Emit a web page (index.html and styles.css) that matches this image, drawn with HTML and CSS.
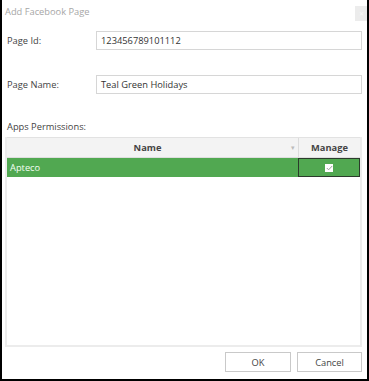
FILE: index.html
```html
<!DOCTYPE html>
<html>
<head>
<meta charset="utf-8">
<link rel="stylesheet" href="styles.css">
</head>
<body>
<div class="dialog">
  <div class="titlebar">
    <span class="title">Add Facebook Page</span>
    <span class="close">&#x2715;</span>
  </div>
  <div class="field">
    <label class="label">Page Id:</label>
    <div class="input">123456789101112</div>
  </div>
  <div class="field field-2">
    <label class="label">Page Name:</label>
    <div class="input">Teal Green Holidays</div>
  </div>
  <div class="section-label">Apps Permissions:</div>
  <div class="grid">
    <div class="grid-head">
      <div class="col-name">Name<span class="sort">&#9662;</span></div>
      <div class="col-manage">Manage</div>
    </div>
    <div class="grid-row selected">
      <div class="col-name cell">Apteco</div>
      <div class="col-manage cell focused">
        <span class="check">
          <svg width="7" height="6" viewBox="0 0 7 6"><path d="M0.8 3 L2.6 4.8 L6.2 1" fill="none" stroke="#9a9a9a" stroke-width="1"/></svg>
        </span>
      </div>
    </div>
  </div>
  <div class="buttons">
    <button class="btn btn-ok">OK</button>
    <button class="btn">Cancel</button>
  </div>
</div>
</body>
</html>
```
FILE: styles.css
```css
html, body {
  margin: 0;
  padding: 0;
  background: #fff;
}
body {
  font-family: "Open Sans", "Noto Sans", sans-serif;
  font-size: 9.3px;
  color: #444;
}
.dialog {
  width: 369px;
  height: 381px;
  box-sizing: border-box;
  border-left: 2px solid #000;
  border-right: 2px solid #000;
  border-bottom: 2px solid #000;
  display: flex;
  flex-direction: column;
  background: #fff;
}
.titlebar {
  height: 31px;
  display: flex;
  align-items: flex-start;
  justify-content: space-between;
  padding-left: 3px;
  box-sizing: border-box;
}
.title {
  margin-top: 5px;
  color: #a6a6a6;
  font-size: 9.3px;
}
.close {
  margin-top: 6px;
  width: 12px;
  height: 15px;
  background: #ececec;
  color: #fafafa;
  font-size: 6px;
  display: flex;
  align-items: center;
  justify-content: center;
}
.field {
  display: flex;
  align-items: center;
  height: 19px;
}
.field-2 {
  margin-top: 25px;
}
.label {
  width: 89px;
  padding-left: 5px;
  color: #444;
}
.input {
  flex: 0 0 266px;
  height: 19px;
  box-sizing: border-box;
  border: 1px solid #d6d6d6;
  padding-left: 4px;
  display: flex;
  align-items: center;
  color: #333;
}
.section-label {
  margin-top: 25px;
  padding-left: 5px;
  height: 16px;
  line-height: 16px;
}
.grid {
  margin: 2px 0 0 3px;
  width: 357px;
  height: 210px;
  box-sizing: border-box;
  border: 2px solid #ececec;
  border-top: 0;
}
.grid-head {
  display: flex;
  height: 21px;
  background: #f3f3f3;
  border-top: 1px solid #e2e2e2;
  box-sizing: border-box;
  border-bottom: 1px solid #dedede;
  font-weight: bold;
  color: #444;
}
.grid-head .col-name {
  position: relative;
  display: flex;
  align-items: center;
  justify-content: center;
  padding-right: 10px;
  box-sizing: border-box;
}
.sort {
  position: absolute;
  right: 3px;
  top: 5px;
  font-size: 7px;
  color: #bbb;
  font-weight: normal;
}
.col-name {
  flex: 0 0 291px;
}
.col-manage {
  flex: 1;
  border-left: 1px solid #dcdcdc;
  display: flex;
  align-items: center;
  justify-content: center;
}
.grid-row {
  display: flex;
  height: 19px;
}
.grid-row.selected {
  background: #51a851;
  color: #f4fff4;
}
.cell {
  display: flex;
  align-items: center;
}
.col-name.cell {
  padding-left: 3px;
  box-sizing: border-box;
}
.focused {
  border: 1px solid #2b3b2b;
  box-sizing: border-box;
}
.check {
  width: 8px;
  height: 8px;
  background: #fff;
  display: flex;
  align-items: center;
  justify-content: center;
}
.buttons {
  display: flex;
  justify-content: flex-end;
  gap: 6px;
  margin-top: 5px;
  padding-right: 5px;
}
.btn {
  font-family: "Open Sans", "Noto Sans", sans-serif;
  font-size: 9.3px;
  color: #444;
  background: #fff;
  border: 1px solid #c9c9c9;
  height: 20px;
  width: 65px;
  padding: 0;
  margin: 0;
}
.btn-ok {
  width: 66px;
}
```
